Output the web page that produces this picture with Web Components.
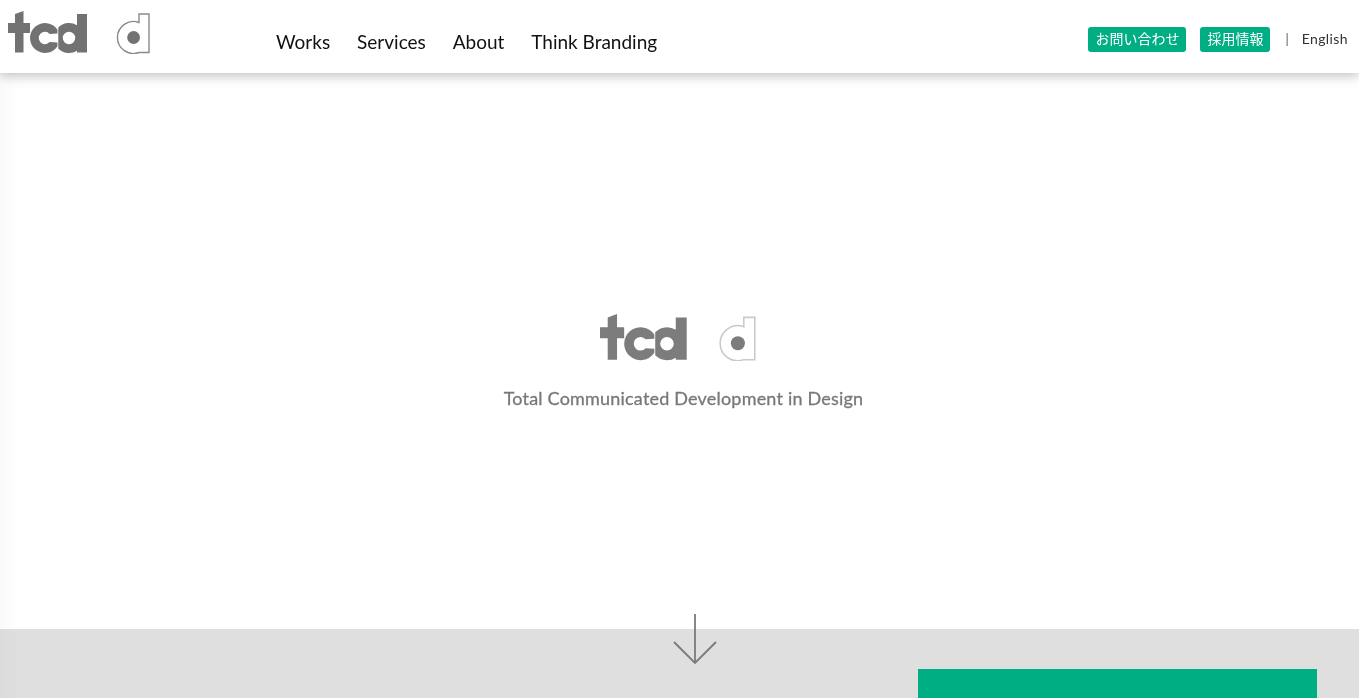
<!DOCTYPE html>
<html lang="ja">
<head>
<meta charset="utf-8">
<title>tcd</title>
<style>
  html, body {
    margin: 0;
    height: 698px;
    overflow: hidden;
    background: #ffffff;
  }
</style>
</head>
<body>
<tcd-page>
  <tcd-header slot="header"></tcd-header>
  <tcd-hero slot="hero" tagline="Total Communicated Development in Design"></tcd-hero>
  <tcd-lower slot="lower"></tcd-lower>
</tcd-page>

<script>
/**
 * The logo, drawn from plain shapes. Colours come from custom properties.
 */
customElements.define('tcd-logo',
  class extends HTMLElement {
    constructor () {
      super()
      this.attachShadow({ mode: 'open' }).innerHTML = `
        <style>
          :host { display: block; width: var(--logo-width, 143px); line-height: 0; }
          svg { width: 100%; height: auto; display: block; }
          .solid { fill: var(--logo-solid, #727272); }
          .line { fill: #fff; stroke: var(--logo-line, #8a8a8a); stroke-width: 1.4; }
        </style>
        <svg viewBox="0 0 143 44" role="img" aria-label="tcd d">
          <path class="solid" d="M7 4 L15.5 1 V13 H22 V23 H15.5 V42.5 H7 V23 H0 V13 H7 Z"/>
          <path class="solid" d="M49.5 19.7 A15 15 0 1 0 49.5 36.3 L49.5 32.5 L41.6 32.1 A6.2 6.2 0 1 1 41.6 23.9 L49.5 23.5 Z"/>
          <path class="solid" fill-rule="evenodd" d="M69 4 H79 V42.5 H69 V40.7 A15 15 0 0 1 50.3 38.5 V17.5 A15 15 0 0 1 69 15.3 Z M61 21.8 A6.2 6.2 0 1 0 61 34.2 A6.2 6.2 0 1 0 61 21.8 Z"/>
          <path class="line" d="M131 4 H141 V42.5 H131 A16 16 0 1 1 131 12.5 Z"/>
          <circle class="solid" cx="125.6" cy="27.5" r="6.4"/>
        </svg>`
    }
  }
)

/**
 * The top bar with logo, navigation and the small links on the right.
 */
customElements.define('tcd-header',
  class extends HTMLElement {
    constructor () {
      super()
      this.attachShadow({ mode: 'open' }).innerHTML = `
        <style>
          :host {
            display: flex;
            align-items: flex-start;
            height: 73px;
            box-sizing: border-box;
            padding: 10px 11px 0 8px;
            background: #fff;
            box-shadow: 0 2px 12px rgba(0, 0, 0, .28);
            position: relative;
            z-index: 2;
            font-family: Lato, "Noto Sans CJK JP", sans-serif;
          }
          nav { display: flex; gap: 26.9px; margin: 19px 0 0 125px; will-change: opacity; }
          a { color: #111; text-decoration: none; }
          nav a { font-size: 19px; line-height: 25px; }
          .side {
            margin-left: auto;
            margin-top: 17px;
            display: flex;
            align-items: center;
            font-size: 14px;
            will-change: opacity;
          }
          .btn {
            height: 25px;
            line-height: 24px;
            padding: 0 7px;
            border-radius: 3px;
            background: #00ae84;
            color: #fff;
            margin-right: 14px;
          }
          .sep { margin: -2px 13px 0 1px; color: #555; font-size: 13px; }
          .lang { color: #333; letter-spacing: .4px; margin-top: -2px; }
        </style>
        <tcd-logo></tcd-logo>
        <nav>
          <a href="#">Works</a>
          <a href="#">Services</a>
          <a href="#">About</a>
          <a href="#">Think Branding</a>
        </nav>
        <div class="side">
          <a class="btn" href="#">お問い合わせ</a>
          <a class="btn" href="#">採用情報</a>
          <span class="sep">|</span>
          <a class="lang" href="#">English</a>
        </div>`
    }
  }
)

/**
 * The white first view with the large logo and the tagline.
 */
customElements.define('tcd-hero',
  class extends HTMLElement {
    constructor () {
      super()
      this.attachShadow({ mode: 'open' }).innerHTML = `
        <style>
          :host {
            display: flex;
            flex-direction: column;
            align-items: center;
            height: 556px;
            box-sizing: border-box;
            padding-top: 240px;
            background: linear-gradient(90deg, #fafafa, #fff 20px);
            --logo-width: 157px;
            --logo-solid: #7c7c7c;
            --logo-line: #c9c9c9;
          }
          tcd-logo { margin-right: 3px; }
          p {
            margin: 24px 0 0 8px;
            font: 18px/26px Lato, sans-serif;
            letter-spacing: .2px;
            color: #787878;
            -webkit-text-stroke: .3px #787878;
            white-space: nowrap;
            will-change: opacity;
          }
        </style>
        <tcd-logo></tcd-logo>
        <p></p>`
      this.shadowRoot.querySelector('p').textContent = this.getAttribute('tagline')
    }
  }
)

/**
 * The grey band below the fold, with the green panel and the arrow on the seam.
 */
customElements.define('tcd-lower',
  class extends HTMLElement {
    constructor () {
      super()
      this.attachShadow({ mode: 'open' }).innerHTML = `
        <style>
          :host {
            display: flex;
            justify-content: flex-end;
            position: relative;
            height: 69px;
            padding: 40px 42px 0 0;
            box-sizing: border-box;
            background: linear-gradient(90deg, #dcdcdc, #dfdfdf 20px);
            overflow: visible;
          }
          .panel { width: 399px; height: 100px; background: #00ae84; }
          svg { position: absolute; left: 672px; top: -16px; }
        </style>
        <svg width="46" height="52" viewBox="0 0 46 52" aria-hidden="true">
          <path d="M23 1 V50 M2 29 L23 50 L44 29" fill="none" stroke="#7a7a7a" stroke-width="1.8"/>
        </svg>
        <div class="panel"></div>`
    }
  }
)

/**
 * The page frame, stacking the three parts.
 */
customElements.define('tcd-page',
  class extends HTMLElement {
    constructor () {
      super()
      this.attachShadow({ mode: 'open' }).innerHTML = `
        <style>
          :host { display: flex; flex-direction: column; height: 698px; overflow: hidden; }
        </style>
        <slot name="header"></slot>
        <slot name="hero"></slot>
        <slot name="lower"></slot>`
    }
  }
)
</script>
</body>
</html>
